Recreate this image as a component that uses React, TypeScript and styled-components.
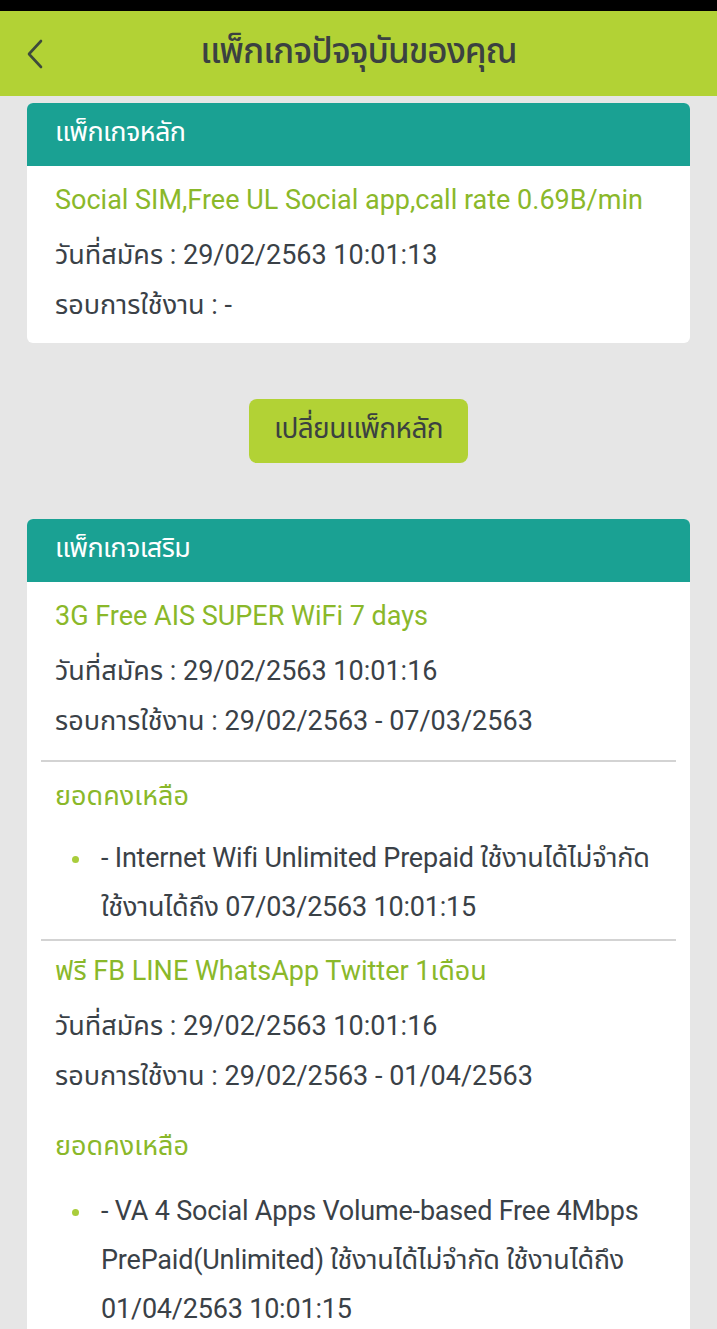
import React from "react";
import styled, { createGlobalStyle } from "styled-components";

const FONT = `Roboto, "Noto Sans Thai", "Noto Sans Thai UI", "Noto Sans", sans-serif`;

const Global = createGlobalStyle`
  html, body { margin: 0; padding: 0; background: #e6e6e6; }
  body { font-family: ${FONT}; -webkit-font-smoothing: antialiased; }
  * { box-sizing: border-box; }
`;

const Page = styled.div`
  width: 717px;
  min-height: 1329px;
  background: #e6e6e6;
  overflow: hidden;
`;

const StatusBar = styled.div`
  height: 11px;
  background: #000;
`;

const Header = styled.header`
  height: 85px;
  background: #b2d235;
  display: grid;
  grid-template-columns: 70px 1fr 70px;
  align-items: center;
`;

const BackButton = styled.button`
  border: 0;
  background: transparent;
  padding: 0 0 0 26px;
  display: flex;
  align-items: center;
  height: 100%;
  cursor: pointer;
`;

const Title = styled.h1`
  margin: 0;
  text-align: center;
  font-size: 35px;
  font-weight: 500;
  color: #3b4141;
  letter-spacing: -1px;
  padding-bottom: 2px;
`;

const Content = styled.main`
  padding: 7px 27px 0;
  display: flex;
  flex-direction: column;
`;

const Card = styled.section`
  background: #fff;
  border-radius: 6px;
  overflow: hidden;
`;

const CardHeader = styled.div`
  height: 63px;
  background: #1aa193;
  color: #fff;
  font-size: 27px;
  letter-spacing: -0.6px;
  display: flex;
  align-items: center;
  padding: 0 28px 4px;
`;

const CardBody = styled.div<{ $pt: number; $pb: number }>`
  padding: ${(p) => p.$pt}px 14px ${(p) => p.$pb}px;
  display: flex;
  flex-direction: column;
`;

const Line = styled.div<{ $green?: boolean; $mt?: number }>`
  padding: 0 14px;
  height: 50px;
  line-height: 50px;
  font-size: 27px;
  letter-spacing: 0;
  color: ${(p) => (p.$green ? "#8ab82a" : "#3a4147")};
  margin-top: ${(p) => p.$mt ?? 0}px;
  white-space: nowrap;
`;

const Divider = styled.hr<{ $mt: number; $mb: number }>`
  border: 0;
  border-top: 2px solid #d3d3d3;
  margin: ${(p) => p.$mt}px 0 ${(p) => p.$mb}px;
`;

const BulletList = styled.ul<{ $mt: number }>`
  list-style: none;
  margin: ${(p) => p.$mt}px 0 0;
  padding: 0 0 0 16px;
`;

const BulletItem = styled.li`
  position: relative;
  padding: 0 0 0 44px;
  margin-right: -6px;
  font-size: 27px;
  letter-spacing: -0.2px;
  line-height: 49px;
  color: #3a4147;
  &::before {
    content: "";
    position: absolute;
    left: 15px;
    top: 22px;
    width: 7px;
    height: 7px;
    border-radius: 50%;
    background: #a9cd3b;
  }
`;

const Word = styled.span`
  white-space: nowrap;
`;

const ButtonRow = styled.div`
  display: flex;
  justify-content: center;
  padding: 56px 0 56px;
`;

const ChangeButton = styled.button`
  width: 219px;
  height: 64px;
  border: 0;
  border-radius: 8px;
  background: #b2d235;
  color: #3b4141;
  font-family: ${FONT};
  font-size: 28px;
  letter-spacing: -0.6px;
  padding: 0 0 4px;
  cursor: pointer;
`;

const Chevron = () => (
  <svg width="18" height="30" viewBox="0 0 18 30" fill="none">
    <path d="M15 2 L3 15 L15 28" stroke="#3d4a3c" strokeWidth="2.6" strokeLinecap="round" strokeLinejoin="round" />
  </svg>
);

export default function App() {
  return (
    <Page>
      <Global />
      <StatusBar />
      <Header>
        <BackButton aria-label="back">
          <Chevron />
        </BackButton>
        <Title>แพ็กเกจปัจจุบันของคุณ</Title>
        <span />
      </Header>
      <Content>
        <Card>
          <CardHeader>แพ็กเกจหลัก</CardHeader>
          <CardBody $pt={9} $pb={13}>
            <Line $green>Social SIM,Free UL Social app,call rate 0.69B/min</Line>
            <Line $mt={5}>วันที่สมัคร : 29/02/2563 10:01:13</Line>
            <Line>รอบการใช้งาน : -</Line>
          </CardBody>
        </Card>
        <ButtonRow>
          <ChangeButton>เปลี่ยนแพ็กหลัก</ChangeButton>
        </ButtonRow>
        <Card>
          <CardHeader>แพ็กเกจเสริม</CardHeader>
          <CardBody $pt={9} $pb={20}>
            <Line $green>3G Free AIS SUPER WiFi 7 days</Line>
            <Line $mt={5}>วันที่สมัคร : 29/02/2563 10:01:16</Line>
            <Line>รอบการใช้งาน : 29/02/2563 - 07/03/2563</Line>
            <Divider $mt={14} $mb={9} />
            <Line $green>ยอดคงเหลือ</Line>
            <BulletList $mt={13}>
              <BulletItem>
                - Internet Wifi Unlimited Prepaid <Word>ใช้งานได้ไม่จำกัด</Word> <Word>ใช้งานได้ถึง</Word> 07/03/2563 10:01:15
              </BulletItem>
            </BulletList>
            <Divider $mt={7} $mb={5} />
            <Line $green>ฟรี FB LINE WhatsApp Twitter 1เดือน</Line>
            <Line $mt={5}>วันที่สมัคร : 29/02/2563 10:01:16</Line>
            <Line>รอบการใช้งาน : 29/02/2563 - 01/04/2563</Line>
            <Line $green $mt={20}>ยอดคงเหลือ</Line>
            <BulletList $mt={16}>
              <BulletItem>
                - VA 4 Social Apps Volume-based Free 4Mbps PrePaid(Unlimited) <Word>ใช้งานได้ไม่จำกัด</Word> <Word>ใช้งานได้ถึง</Word> 01/04/2563 10:01:15
              </BulletItem>
            </BulletList>
          </CardBody>
        </Card>
      </Content>
    </Page>
  );
}
